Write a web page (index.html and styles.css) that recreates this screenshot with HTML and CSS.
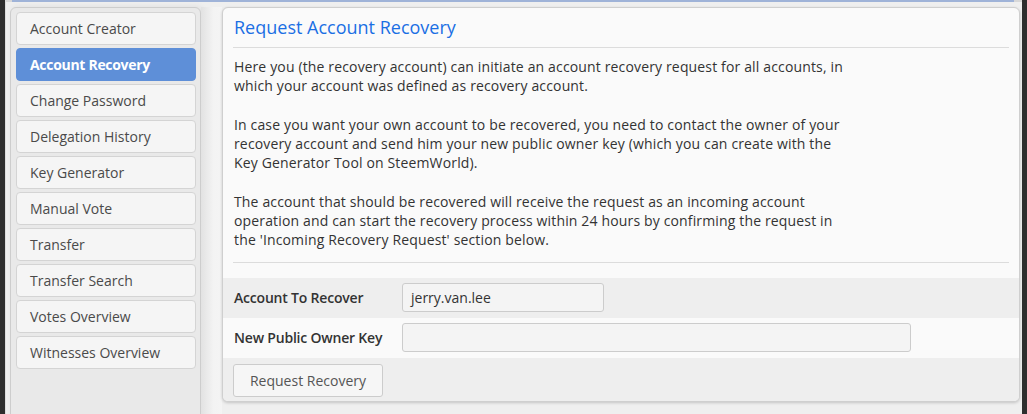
FILE: index.html
```html
<!DOCTYPE html>
<html>
<head>
<meta charset="utf-8">
<link rel="stylesheet" href="styles.css">
</head>
<body>
<div class="page">
  <div class="topline"><div class="topbar"></div></div>
  <div class="layout">
    <nav class="sidebar">
      <a class="item">Account Creator</a>
      <a class="item active">Account Recovery</a>
      <a class="item">Change Password</a>
      <a class="item">Delegation History</a>
      <a class="item">Key Generator</a>
      <a class="item">Manual Vote</a>
      <a class="item">Transfer</a>
      <a class="item">Transfer Search</a>
      <a class="item">Votes Overview</a>
      <a class="item">Witnesses Overview</a>
    </nav>
    <div class="gutter"></div>
    <main class="panel">
      <div class="panel-body">
        <h1 class="title">Request Account Recovery</h1>
        <hr class="rule">
        <div class="text">
          <p>Here you (the recovery account) can initiate an account recovery request for all accounts, in which your account was defined as recovery account.</p>
          <p>In case you want your own account to be recovered, you need to contact the owner of your recovery account and send him your new public owner key (which you can create with the Key Generator Tool on SteemWorld).</p>
          <p>The account that should be recovered will receive the request as an incoming account operation and can start the recovery process within 24 hours by confirming the request in the 'Incoming Recovery Request' section below.</p>
        </div>
        <hr class="rule rule-bottom">
      </div>
      <div class="form">
        <div class="row row-alt">
          <label class="label">Account To Recover</label>
          <div class="input input-short">jerry.van.lee</div>
        </div>
        <div class="row">
          <label class="label">New Public Owner Key</label>
          <div class="input input-long"></div>
        </div>
        <div class="row row-alt row-btn">
          <button class="btn">Request Recovery</button>
        </div>
      </div>
    </main>
  </div>
</div>
</body>
</html>
```
FILE: styles.css
```css
* { box-sizing: border-box; }
html, body {
  margin: 0;
  padding: 0;
  height: 414px;
  overflow: hidden;
}
body {
  background: #2e2e2e;
  font-family: "Open Sans", "Liberation Sans", sans-serif;
  font-size: 14px;
  color: #333;
}
.page {
  margin: 0 5px 0 5px;
  height: 414px;
  background: #efefef;
  border-left: 1px solid #dcdcdc;
  overflow: hidden;
}
.topline {
  height: 2px;
  background: #d8d8d8;
  padding-left: 6px;
  padding-right: 8px;
}
.topbar {
  height: 2px;
  background: #9fb3d8;
}
.layout {
  display: flex;
  align-items: flex-start;
  padding-top: 5px;
  padding-left: 4px;
}
.sidebar {
  width: 191px;
  height: 440px;
  flex: none;
  background: #e9e9e9;
  border: 1px solid #cdcdcd;
  border-radius: 6px;
  padding: 4px 4px 4px 5px;
  display: flex;
  flex-direction: column;
  gap: 3px;
  box-shadow: 2px 0 6px rgba(0,0,0,0.08);
}
.item {
  display: flex;
  align-items: center;
  height: 33px;
  padding-left: 13px;
  background: #f5f5f5;
  border: 1px solid #d4d4d4;
  border-radius: 4px;
  color: #4a4a4a;
  font-size: 14px;
}
.item.active {
  background: #5e8fd8;
  border-color: #5e8fd8;
  color: #fff;
  font-weight: 700;
  letter-spacing: -0.3px;
}
.gutter {
  width: 21px;
  height: 420px;
  flex: none;
  background: linear-gradient(to right, #e2e2e2, #f3f3f3 60%, #f4f4f4);
}
.panel {
  width: 798px;
  flex: none;
  background: #fafafa;
  border: 1px solid #cfcfcf;
  border-radius: 6px;
  box-shadow: 0 1px 3px rgba(0,0,0,0.18);
  overflow: hidden;
}
.panel-body {
  padding: 0 10px 0 10px;
}
.title {
  margin: 0;
  padding: 7px 0 0 1px;
  height: 39px;
  font-size: 18px;
  font-weight: 400;
  color: #1a6fe4;
  line-height: 24px;
}
.rule {
  border: 0;
  border-top: 1px solid #dcdcdc;
  margin: 0;
}
.text {
  padding: 9px 0 12px 1px;
  width: 614px;
  line-height: 19.25px;
  letter-spacing: 0.15px;
  color: #333;
}
.text p { margin: 0 0 19.25px 0; }
.text p:last-child { margin-bottom: 0; }
.rule-bottom { margin-bottom: 15px; }
.form { display: flex; flex-direction: column; }
.row {
  display: flex;
  align-items: center;
  height: 40px;
  padding: 0 10px 0 11px;
  background: #fafafa;
}
.row-alt { background: #eeeeee; }
.row-btn { height: 43px; padding-left: 10px; padding-top: 2px; }
.label {
  width: 168px;
  flex: none;
  font-weight: 600;
  color: #333;
  letter-spacing: -0.2px;
}
.input {
  height: 29px;
  background: #f4f4f4;
  border: 1px solid #cccccc;
  border-radius: 3px;
  padding-left: 8px;
  display: flex;
  align-items: center;
  color: #333;
}
.input-short { width: 202px; }
.input-long { width: 509px; }
.btn {
  font-family: "Open Sans", "Liberation Sans", sans-serif;
  font-size: 14px;
  color: #555;
  height: 33px;
  width: 150px;
  background: #f6f6f6;
  border: 1px solid #cccccc;
  border-radius: 3px;
  padding: 0;
}
```
